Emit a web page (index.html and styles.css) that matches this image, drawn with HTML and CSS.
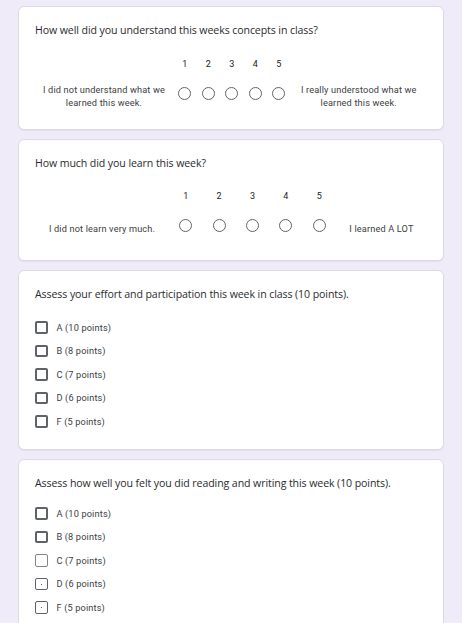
FILE: index.html
```html
<!DOCTYPE html>
<html lang="en">
<head>
<meta charset="utf-8">
<title>Weekly reflection</title>
<link rel="stylesheet" href="styles.css">
</head>
<body>
<main class="form">
  <section class="card card-scale1">
    <div class="question">How well did you understand this weeks concepts in class?</div>
    <div class="scale scale1">
      <div class="nums">
        <span class="spacer"></span>
        <span class="num">1</span><span class="num">2</span><span class="num">3</span><span class="num">4</span><span class="num">5</span>
        <span class="spacer"></span>
      </div>
      <div class="choices">
        <span class="side">I did not understand what we learned this week.</span>
        <span class="cell"><span class="radio"></span></span>
        <span class="cell"><span class="radio"></span></span>
        <span class="cell"><span class="radio"></span></span>
        <span class="cell"><span class="radio"></span></span>
        <span class="cell"><span class="radio"></span></span>
        <span class="side">I really understood what we learned this week.</span>
      </div>
    </div>
  </section>

  <section class="card card-scale2">
    <div class="question">How much did you learn this week?</div>
    <div class="scale scale2">
      <div class="nums">
        <span class="spacer"></span>
        <span class="num">1</span><span class="num">2</span><span class="num">3</span><span class="num">4</span><span class="num">5</span>
        <span class="spacer"></span>
      </div>
      <div class="choices">
        <span class="side">I did not learn very much.</span>
        <span class="cell"><span class="radio"></span></span>
        <span class="cell"><span class="radio"></span></span>
        <span class="cell"><span class="radio"></span></span>
        <span class="cell"><span class="radio"></span></span>
        <span class="cell"><span class="radio"></span></span>
        <span class="side">I learned A LOT</span>
      </div>
    </div>
  </section>

  <section class="card card-check">
    <div class="question">Assess your effort and participation this week in class (10 points).</div>
    <ul class="options">
      <li class="option"><span class="box"></span><span class="opt-label">A (10 points)</span></li>
      <li class="option"><span class="box"></span><span class="opt-label">B (8 points)</span></li>
      <li class="option"><span class="box"></span><span class="opt-label">C (7 points)</span></li>
      <li class="option"><span class="box"></span><span class="opt-label">D (6 points)</span></li>
      <li class="option"><span class="box"></span><span class="opt-label">F (5 points)</span></li>
    </ul>
  </section>

  <section class="card card-check">
    <div class="question">Assess how well you felt you did reading and writing this week (10 points).</div>
    <ul class="options options-tight">
      <li class="option"><span class="box"></span><span class="opt-label">A (10 points)</span></li>
      <li class="option"><span class="box"></span><span class="opt-label">B (8 points)</span></li>
      <li class="option"><span class="box box-light"></span><span class="opt-label">C (7 points)</span></li>
      <li class="option"><span class="box box-dot"></span><span class="opt-label">D (6 points)</span></li>
      <li class="option"><span class="box box-dot"></span><span class="opt-label">F (5 points)</span></li>
    </ul>
  </section>
</main>
</body>
</html>
```

FILE: styles.css
```css
* { box-sizing: border-box; }

html, body {
  margin: 0;
  padding: 0;
  background: #f0ebf8;
}

body {
  font-family: Roboto, "Liberation Sans", sans-serif;
  color: #202124;
}

.form {
  display: flex;
  flex-direction: column;
  gap: 9px;
  padding: 6px 18px 20px 18px;
}

.card {
  background: #ffffff;
  border: 1px solid #dadce0;
  border-radius: 6px;
  padding: 15px 16px 0 16px;
  box-shadow: 0 1px 1px rgba(0,0,0,0.06);
}

.question {
  font-family: "Open Sans", Roboto, sans-serif;
  font-size: 10.6px;
  line-height: 16px;
  color: #2a2b2e;
  letter-spacing: -0.1px;
}

/* linear scale */
.scale { display: flex; flex-direction: column; }

.nums, .choices { display: grid; }

.scale1 .nums, .scale1 .choices {
  grid-template-columns: 138px repeat(5, 23.5px) 1fr;
}
.scale2 .nums, .scale2 .choices {
  grid-template-columns: 134px repeat(5, 33.4px) 1fr;
}

.nums {
  margin-top: 19px;
  font-size: 9px;
  line-height: 12px;
  color: #202124;
}
.scale1 .nums { margin-top: 20px; }
.num { text-align: center; }

.choices {
  align-items: start;
  font-size: 9.2px;
  line-height: 12.5px;
  color: #3c4043;
}

.scale1 .choices { margin-top: 14px; padding-bottom: 20px; }
.scale2 .choices { margin-top: 17px; padding-bottom: 24px; }

.side {
  text-align: center;
  letter-spacing: 0.15px;
  padding: 0 4px;
}
.scale2 .side { padding-top: 4px; }

.cell {
  display: flex;
  justify-content: center;
}
.scale1 .cell { padding-top: 2.5px; }

.radio {
  width: 13px;
  height: 13px;
  border: 1px solid #5f6368;
  border-radius: 50%;
}

/* checkboxes */
.options {
  list-style: none;
  margin: 20px 0 0 0;
  padding: 0 0 21px 0;
  display: flex;
  flex-direction: column;
  gap: 11.5px;
}
.options-tight { margin-top: 17px; }

.option {
  display: flex;
  align-items: center;
  gap: 8.5px;
  height: 12px;
}

.box {
  flex: none;
  width: 13px;
  height: 12.5px;
  border: 2px solid #5f6368;
  border-radius: 2px;
  position: relative;
}
.box-light {
  border: 1.5px solid #80868b;
}
.box-dot {
  border: 1px solid #5f6368;
}
.box-dot::after {
  content: "";
  position: absolute;
  left: 50%;
  top: 50%;
  width: 1px;
  height: 1px;
  margin: -0.5px 0 0 -0.5px;
  background: #5f6368;
}

.opt-label {
  font-size: 9.2px;
  line-height: 12px;
  color: #3c4043;
  letter-spacing: 0.15px;
}
```
